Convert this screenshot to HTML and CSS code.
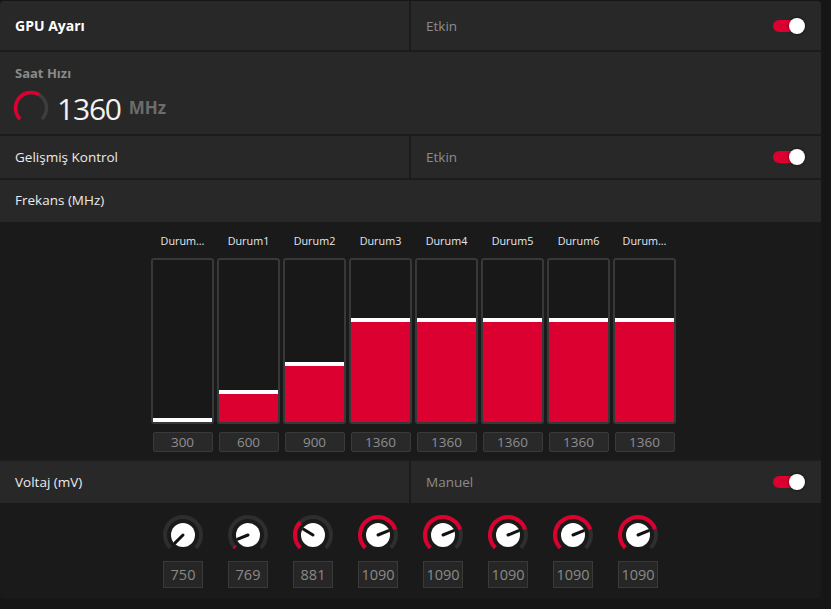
FILE: index.html
```html
<!DOCTYPE html>
<html lang="tr">
<head>
<meta charset="utf-8">
<title>GPU Ayarı</title>
<link rel="stylesheet" href="styles.css">
</head>
<body>
<div class="panel">
  <div class="split row-top">
    <div class="cell"><span class="title">GPU Ayarı</span></div>
    <div class="cell"><span class="state">Etkin</span><span class="toggle"><span class="toggle-knob"></span></span></div>
  </div>

  <div class="clock">
    <div class="clock-label">Saat Hızı</div>
    <div class="clock-value">
      <svg class="gauge" width="36" height="36" viewBox="-18 -18 36 36">
        <path d="M -10.96 10.96 A 15.5 15.5 0 1 1 10.96 10.96" fill="none" stroke="#3d3d3d" stroke-width="3.5"/>
        <path d="M -10.96 10.96 A 15.5 15.5 0 0 1 8.21 -13.14" fill="none" stroke="#dc0030" stroke-width="3.5"/>
      </svg>
      <span class="num">1360</span><span class="unit">MHz</span>
    </div>
  </div>

  <div class="split row-std">
    <div class="cell"><span class="label">Gelişmiş Kontrol</span></div>
    <div class="cell"><span class="state">Etkin</span><span class="toggle"><span class="toggle-knob"></span></span></div>
  </div>

  <div class="section">
    <div class="single"><span class="label">Frekans (MHz)</span></div>
    <div class="bars-area">
      <div class="bars">
        <div class="col"><div class="col-label">Durum…</div><div class="bar"><div class="fill" style="height:4px"></div></div><div class="val">300</div></div>
        <div class="col"><div class="col-label">Durum1</div><div class="bar"><div class="fill" style="height:32px"></div></div><div class="val">600</div></div>
        <div class="col"><div class="col-label">Durum2</div><div class="bar"><div class="fill" style="height:60px"></div></div><div class="val">900</div></div>
        <div class="col"><div class="col-label">Durum3</div><div class="bar"><div class="fill" style="height:104px"></div></div><div class="val">1360</div></div>
        <div class="col"><div class="col-label">Durum4</div><div class="bar"><div class="fill" style="height:104px"></div></div><div class="val">1360</div></div>
        <div class="col"><div class="col-label">Durum5</div><div class="bar"><div class="fill" style="height:104px"></div></div><div class="val">1360</div></div>
        <div class="col"><div class="col-label">Durum6</div><div class="bar"><div class="fill" style="height:104px"></div></div><div class="val">1360</div></div>
        <div class="col"><div class="col-label">Durum…</div><div class="bar"><div class="fill" style="height:104px"></div></div><div class="val">1360</div></div>
      </div>
    </div>
  </div>

  <div class="section">
    <div class="split row-std">
      <div class="cell"><span class="label">Voltaj (mV)</span></div>
      <div class="cell"><span class="state">Manuel</span><span class="toggle"><span class="toggle-knob"></span></span></div>
    </div>
    <div class="knobs-area">
      <div class="knobs">
        <div class="kcol">
          <svg class="dial" width="40" height="40" viewBox="-20 -20 40 40">
            <path d="M -12.73 12.73 A 18 18 0 1 1 12.73 12.73" fill="none" stroke="#2e2e2e" stroke-width="4"/>
            <circle r="12" fill="#fff"/>
            <line x1="0" y1="0" x2="-7.9" y2="7.9" stroke="#111" stroke-width="3" stroke-linecap="round"/>
          </svg>
          <div class="kval">750</div>
        </div>
        <div class="kcol">
          <svg class="dial" width="40" height="40" viewBox="-20 -20 40 40">
            <path d="M -12.73 12.73 A 18 18 0 1 1 12.73 12.73" fill="none" stroke="#2e2e2e" stroke-width="4"/>
            <path d="M -12.73 12.73 A 18 18 0 0 1 -13.79 11.57" fill="none" stroke="#dc0030" stroke-width="4"/>
            <circle r="12" fill="#fff"/>
            <line x1="0" y1="0" x2="-10.2" y2="4.12" stroke="#111" stroke-width="3" stroke-linecap="round"/>
          </svg>
          <div class="kval">769</div>
        </div>
        <div class="kcol">
          <svg class="dial" width="40" height="40" viewBox="-20 -20 40 40">
            <path d="M -12.73 12.73 A 18 18 0 1 1 12.73 12.73" fill="none" stroke="#2e2e2e" stroke-width="4"/>
            <path d="M -12.73 12.73 A 18 18 0 0 1 -12.73 -12.73" fill="none" stroke="#dc0030" stroke-width="4"/>
            <circle r="12" fill="#fff"/>
            <line x1="0" y1="0" x2="-9.43" y2="-5.67" stroke="#111" stroke-width="3" stroke-linecap="round"/>
          </svg>
          <div class="kval">881</div>
        </div>
        <div class="kcol">
          <svg class="dial" width="40" height="40" viewBox="-20 -20 40 40">
            <path d="M -12.73 12.73 A 18 18 0 1 1 12.73 12.73" fill="none" stroke="#2e2e2e" stroke-width="4"/>
            <path d="M -12.73 12.73 A 18 18 0 1 1 17.12 -5.56" fill="none" stroke="#dc0030" stroke-width="4"/>
            <circle r="12" fill="#fff"/>
            <line x1="0" y1="0" x2="10.16" y2="-4.21" stroke="#111" stroke-width="3" stroke-linecap="round"/>
          </svg>
          <div class="kval">1090</div>
        </div>
        <div class="kcol">
          <svg class="dial" width="40" height="40" viewBox="-20 -20 40 40">
            <path d="M -12.73 12.73 A 18 18 0 1 1 12.73 12.73" fill="none" stroke="#2e2e2e" stroke-width="4"/>
            <path d="M -12.73 12.73 A 18 18 0 1 1 17.12 -5.56" fill="none" stroke="#dc0030" stroke-width="4"/>
            <circle r="12" fill="#fff"/>
            <line x1="0" y1="0" x2="10.16" y2="-4.21" stroke="#111" stroke-width="3" stroke-linecap="round"/>
          </svg>
          <div class="kval">1090</div>
        </div>
        <div class="kcol">
          <svg class="dial" width="40" height="40" viewBox="-20 -20 40 40">
            <path d="M -12.73 12.73 A 18 18 0 1 1 12.73 12.73" fill="none" stroke="#2e2e2e" stroke-width="4"/>
            <path d="M -12.73 12.73 A 18 18 0 1 1 17.12 -5.56" fill="none" stroke="#dc0030" stroke-width="4"/>
            <circle r="12" fill="#fff"/>
            <line x1="0" y1="0" x2="10.16" y2="-4.21" stroke="#111" stroke-width="3" stroke-linecap="round"/>
          </svg>
          <div class="kval">1090</div>
        </div>
        <div class="kcol">
          <svg class="dial" width="40" height="40" viewBox="-20 -20 40 40">
            <path d="M -12.73 12.73 A 18 18 0 1 1 12.73 12.73" fill="none" stroke="#2e2e2e" stroke-width="4"/>
            <path d="M -12.73 12.73 A 18 18 0 1 1 17.12 -5.56" fill="none" stroke="#dc0030" stroke-width="4"/>
            <circle r="12" fill="#fff"/>
            <line x1="0" y1="0" x2="10.16" y2="-4.21" stroke="#111" stroke-width="3" stroke-linecap="round"/>
          </svg>
          <div class="kval">1090</div>
        </div>
        <div class="kcol">
          <svg class="dial" width="40" height="40" viewBox="-20 -20 40 40">
            <path d="M -12.73 12.73 A 18 18 0 1 1 12.73 12.73" fill="none" stroke="#2e2e2e" stroke-width="4"/>
            <path d="M -12.73 12.73 A 18 18 0 1 1 17.12 -5.56" fill="none" stroke="#dc0030" stroke-width="4"/>
            <circle r="12" fill="#fff"/>
            <line x1="0" y1="0" x2="10.16" y2="-4.21" stroke="#111" stroke-width="3" stroke-linecap="round"/>
          </svg>
          <div class="kval">1090</div>
        </div>
      </div>
    </div>
  </div>
</div>
</body>
</html>
```

FILE: styles.css
```css
* { box-sizing: border-box; }

html, body { margin: 0; }

body {
  background: #161616;
  padding-top: 1px;
  width: 831px;
  height: 609px;
  overflow: hidden;
  font-family: "Open Sans", "Noto Sans", sans-serif;
  color: #ececec;
}

.panel {
  width: 821px;
  height: 597px;
  background: #1c1c1c;
  border-radius: 4px;
  overflow: hidden;
  display: flex;
  flex-direction: column;
  gap: 2px;
}

.split {
  display: grid;
  grid-template-columns: 409px 1fr;
  column-gap: 2px;
}

.row-top { height: 49px; }
.row-std { height: 42px; }

.cell {
  background: #282828;
  display: flex;
  align-items: center;
  justify-content: space-between;
  padding: 0 16px 0 15px;
}

.title {
  font-size: 14px;
  font-weight: 700;
  color: #ffffff;
}

.label {
  font-size: 13.5px;
  color: #ececec;
}

.state {
  font-size: 13.5px;
  color: #8c8c8c;
}

.toggle {
  position: relative;
  width: 32px;
  height: 16px;
}

.toggle::before {
  content: "";
  position: absolute;
  left: 0;
  top: 2px;
  width: 28px;
  height: 12px;
  border-radius: 6px;
  background: #dc0030;
}

.toggle-knob {
  position: absolute;
  right: 0;
  top: 0;
  width: 16px;
  height: 16px;
  border-radius: 50%;
  background: #ffffff;
  box-shadow: 0 0 3px rgba(0, 0, 0, 0.7);
}

.clock {
  background: #282828;
  height: 82px;
  padding: 12px 14px 0 15px;
}

.clock-label {
  font-size: 13px;
  font-weight: 700;
  line-height: 18px;
  color: #8a8a8a;
}

.clock-value {
  display: flex;
  align-items: center;
  margin-top: 6px;
  margin-left: -2px;
}

.gauge { display: block; }

.num {
  margin-left: 8px;
  margin-top: 3px;
  font-size: 30px;
  line-height: 36px;
  font-weight: 400;
  letter-spacing: -1.2px;
  color: #f2f2f2;
}

.unit {
  margin-left: 8px;
  font-size: 17px;
  font-weight: 700;
  color: #6c6c6c;
}

.section {
  display: flex;
  flex-direction: column;
}

.single {
  background: #282828;
  height: 42px;
  display: flex;
  align-items: center;
  padding: 0 15px 2px;
}

.bars-area {
  background: #1a1a1a;
  height: 237px;
  padding: 11px 0 0 6px;
}

.bars {
  display: flex;
  justify-content: center;
  gap: 3px;
}

.col {
  width: 63px;
  display: flex;
  flex-direction: column;
  align-items: center;
}

.col-label {
  height: 16px;
  line-height: 16px;
  font-size: 10.8px;
  color: #e4e8ee;
  white-space: nowrap;
  margin-bottom: 9px;
}

.bar {
  width: 63px;
  height: 166px;
  border: 2px solid #383838;
  border-radius: 3px;
  background: #181818;
  display: flex;
  flex-direction: column;
  justify-content: flex-end;
}

.fill {
  background: #dc0030;
  border-top: 4px solid #ffffff;
}

.val {
  margin-top: 8px;
  width: 60px;
  height: 20px;
  border: 1px solid #3a3a3a;
  border-radius: 2px;
  background: #292929;
  color: #8e8e8e;
  font-size: 13.5px;
  display: flex;
  align-items: center;
  justify-content: center;
}

.knobs-area {
  background: #1a1a1a;
  height: 94px;
  padding-top: 12px;
}

.knobs {
  display: flex;
  justify-content: center;
  gap: 25px;
}

.kcol {
  width: 40px;
  display: flex;
  flex-direction: column;
  align-items: center;
}

.dial { display: block; }

.kval {
  margin-top: 6px;
  width: 40px;
  height: 27px;
  border: 1px solid #3a3a3a;
  background: #262626;
  color: #8a8a8a;
  font-size: 14.5px;
  display: flex;
  align-items: center;
  justify-content: center;
}
```
